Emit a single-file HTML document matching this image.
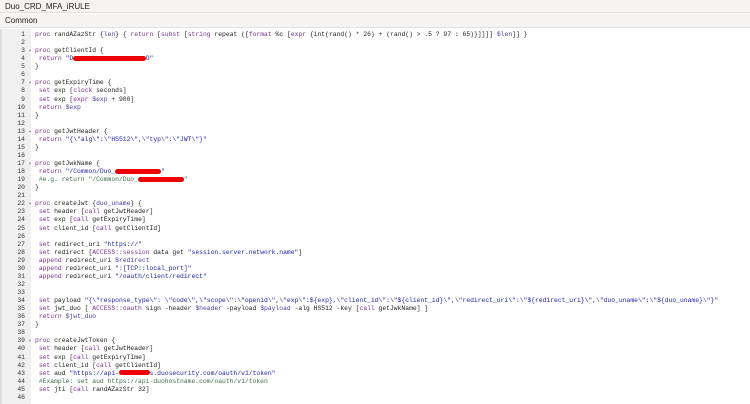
<!DOCTYPE html>
<html><head><meta charset="utf-8"><style>
body{margin:0;width:750px;height:404px;overflow:hidden;background:#fff;font-family:"Liberation Sans",sans-serif;}
.h1{position:absolute;left:0;top:0;width:750px;height:13px;background:#f5f4f2;border-bottom:1px solid #dcdcdc;font-size:8px;line-height:13px;color:#222;padding-left:5px;box-sizing:border-box}
.h2{position:absolute;left:0;top:14px;width:750px;height:14px;background:#f5f4f2;border-bottom:1px solid #e2e2e2;font-size:8px;line-height:14px;color:#222;padding-left:5px;box-sizing:border-box}
.gut{position:absolute;left:0;top:29px;width:31px;height:375px;background:#f0f0f0;border-left:2px solid #ddd;box-sizing:border-box}
.code{position:absolute;left:0;top:31px;font-family:"Liberation Mono",monospace;font-size:6.37px;line-height:8.07px;white-space:pre;color:#222}
.ln{display:inline-block;width:25px;text-align:right;color:#333}
.ar{display:inline-block;width:10px;color:#777;font-size:5px;text-align:center}
.k{color:#7a2f8f}.s{color:#2222aa}.c{color:#3a6e4a}.v{color:#4b3a9a}
.r{display:inline-block;background:#e00;color:transparent;border-radius:3px;height:5px;line-height:5px;vertical-align:middle;overflow:hidden}
</style></head><body>
<div class="h1">Duo_CRD_MFA_iRULE</div>
<div class="h2">Common</div>
<div class="gut"></div>
<div class="code"><span class="ln">1</span><span class="ar"> </span><span class="k">proc</span> randAZazStr {<span class="v">len</span>} { <span class="k">return</span> [<span class="k">subst</span> [<span class="k">string</span> repeat ([<span class="k">format</span> %c [<span class="k">expr</span> {int(rand() * 26) + (rand() &gt; .5 ? 97 : 65)}]]]] <span class="v">$len</span>]] }
<span class="ln">2</span>
<span class="ln">3</span><span class="ar">▾</span><span class="k">proc</span> getClientId {
<span class="ln">4</span><span class="ar"> </span> <span class="k">return</span> <span class="s">"D<span class="r">XXXXXXXXXXXXXXXXXXX</span>O"</span>
<span class="ln">5</span><span class="ar"> </span>}
<span class="ln">6</span>
<span class="ln">7</span><span class="ar">▾</span><span class="k">proc</span> getExpiryTime {
<span class="ln">8</span><span class="ar"> </span> <span class="k">set</span> exp [<span class="k">clock</span> seconds]
<span class="ln">9</span><span class="ar"> </span> <span class="k">set</span> exp [<span class="k">expr</span> <span class="v">$exp</span> + 900]
<span class="ln">10</span><span class="ar"> </span> <span class="k">return</span> <span class="v">$exp</span>
<span class="ln">11</span><span class="ar"> </span>}
<span class="ln">12</span>
<span class="ln">13</span><span class="ar">▾</span><span class="k">proc</span> getJwtHeader {
<span class="ln">14</span><span class="ar"> </span> <span class="k">return</span> <span class="s">"{\"alg\":\"HS512\",\"typ\":\"JWT\"}"</span>
<span class="ln">15</span><span class="ar"> </span>}
<span class="ln">16</span>
<span class="ln">17</span><span class="ar">▾</span><span class="k">proc</span> getJwkName {
<span class="ln">18</span><span class="ar"> </span> <span class="k">return</span> <span class="s">"/Common/Duo_<span class="r">XXXXXXXXXXXX</span>"</span>
<span class="ln">19</span><span class="ar"> </span> <span class="c">#e.g. return "/Common/Duo_<span class="r">XXXXXXXXXXXX</span>"</span>
<span class="ln">20</span><span class="ar"> </span>}
<span class="ln">21</span>
<span class="ln">22</span><span class="ar">▾</span><span class="k">proc</span> createJwt {<span class="v">duo_uname</span>} {
<span class="ln">23</span><span class="ar"> </span> <span class="k">set</span> header [<span class="k">call</span> getJwtHeader]
<span class="ln">24</span><span class="ar"> </span> <span class="k">set</span> exp [<span class="k">call</span> getExpiryTime]
<span class="ln">25</span><span class="ar"> </span> <span class="k">set</span> client_id [<span class="k">call</span> getClientId]
<span class="ln">26</span>
<span class="ln">27</span><span class="ar"> </span> <span class="k">set</span> redirect_uri <span class="s">"https://"</span>
<span class="ln">28</span><span class="ar"> </span> <span class="k">set</span> redirect [<span class="k">ACCESS::session</span> data get <span class="s">"session.server.network.name"</span>]
<span class="ln">29</span><span class="ar"> </span> <span class="k">append</span> redirect_uri <span class="v">$redirect</span>
<span class="ln">30</span><span class="ar"> </span> <span class="k">append</span> redirect_uri <span class="s">":[TCP::local_port]"</span>
<span class="ln">31</span><span class="ar"> </span> <span class="k">append</span> redirect_uri <span class="s">"/oauth/client/redirect"</span>
<span class="ln">32</span>
<span class="ln">33</span>
<span class="ln">34</span><span class="ar"> </span> <span class="k">set</span> payload <span class="s">"{\"response_type\": \"code\",\"scope\":\"openid\",\"exp\":${exp},\"client_id\":\"${client_id}\",\"redirect_uri\":\"${redirect_uri}\",\"duo_uname\":\"${duo_uname}\"}"</span>
<span class="ln">35</span><span class="ar"> </span> <span class="k">set</span> jwt_duo [ <span class="k">ACCESS::oauth</span> sign -header <span class="v">$header</span> -payload <span class="v">$payload</span> -alg HS512 -key [<span class="k">call</span> getJwkName] ]
<span class="ln">36</span><span class="ar"> </span> <span class="k">return</span> <span class="v">$jwt_duo</span>
<span class="ln">37</span><span class="ar"> </span>}
<span class="ln">38</span>
<span class="ln">39</span><span class="ar">▾</span><span class="k">proc</span> createJwtToken {
<span class="ln">40</span><span class="ar"> </span> <span class="k">set</span> header [<span class="k">call</span> getJwtHeader]
<span class="ln">41</span><span class="ar"> </span> <span class="k">set</span> exp [<span class="k">call</span> getExpiryTime]
<span class="ln">42</span><span class="ar"> </span> <span class="k">set</span> client_id [<span class="k">call</span> getClientId]
<span class="ln">43</span><span class="ar"> </span> <span class="k">set</span> aud <span class="s">"https://api-<span class="r">XXXXXXXX</span>s.duosecurity.com/oauth/v1/token"</span>
<span class="ln">44</span><span class="ar"> </span> <span class="c">#Example: set aud https://api-duohostname.com/oauth/v1/token</span>
<span class="ln">45</span><span class="ar"> </span> <span class="k">set</span> jti [<span class="k">call</span> randAZazStr 32]
<span class="ln">46</span>
</div>
</body></html>
